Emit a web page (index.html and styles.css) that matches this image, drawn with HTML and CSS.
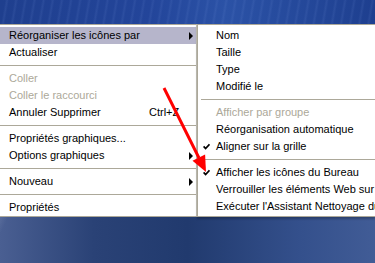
FILE: index.html
```html
<!DOCTYPE html>
<html lang="fr">
<head>
  <meta charset="utf-8" />
  <title>Menu contextuel du Bureau</title>
  <link rel="stylesheet" href="styles.css">
</head>
<body>
<div class="desk">
  <div class="desk-top"></div>
  <div class="menus">
    <ul class="menu menu--main">
      <li class="menu-item menu-item--hot"><span class="menu-label">Réorganiser les icônes par</span><span class="menu-sub"><i class="tri"></i></span></li>
      <li class="menu-item"><span class="menu-label">Actualiser</span><span class="menu-sub"></span></li>
      <li class="menu-sep"></li>
      <li class="menu-item menu-item--off"><span class="menu-label">Coller</span><span class="menu-sub"></span></li>
      <li class="menu-item menu-item--off"><span class="menu-label">Coller le raccourci</span><span class="menu-sub"></span></li>
      <li class="menu-item"><span class="menu-label">Annuler Supprimer</span><span class="menu-key">Ctrl+Z</span><span class="menu-sub"></span></li>
      <li class="menu-sep"></li>
      <li class="menu-item"><span class="menu-label">Propriétés graphiques...</span><span class="menu-sub"></span></li>
      <li class="menu-item"><span class="menu-label">Options graphiques</span><span class="menu-sub"><i class="tri"></i></span></li>
      <li class="menu-sep"></li>
      <li class="menu-item"><span class="menu-label">Nouveau</span><span class="menu-sub"><i class="tri"></i></span></li>
      <li class="menu-sep"></li>
      <li class="menu-item"><span class="menu-label">Propriétés</span><span class="menu-sub"></span></li>
    </ul>
    <ul class="menu menu--side">
      <li class="menu-item"><span class="menu-check"></span><span class="menu-label">Nom</span></li>
      <li class="menu-item"><span class="menu-check"></span><span class="menu-label">Taille</span></li>
      <li class="menu-item"><span class="menu-check"></span><span class="menu-label">Type</span></li>
      <li class="menu-item"><span class="menu-check"></span><span class="menu-label">Modifié le</span></li>
      <li class="menu-sep"></li>
      <li class="menu-item menu-item--off"><span class="menu-check"></span><span class="menu-label">Afficher par groupe</span></li>
      <li class="menu-item"><span class="menu-check"></span><span class="menu-label">Réorganisation automatique</span></li>
      <li class="menu-item"><span class="menu-check"><svg class="tick" viewBox="0 0 7 7"><path d="M0.6 3.4 L2.6 5.6 L6.5 1.2" /></svg></span><span class="menu-label">Aligner sur la grille</span></li>
      <li class="menu-sep"></li>
      <li class="menu-item"><span class="menu-check"><svg class="tick" viewBox="0 0 7 7"><path d="M0.6 3.4 L2.6 5.6 L6.5 1.2" /></svg></span><span class="menu-label">Afficher les icônes du Bureau</span></li>
      <li class="menu-item"><span class="menu-check"></span><span class="menu-label">Verrouiller les éléments Web sur le Bureau</span></li>
      <li class="menu-item"><span class="menu-check"></span><span class="menu-label">Exécuter l'Assistant Nettoyage du Bureau</span></li>
    </ul>
  </div>
  <svg class="pointer" viewBox="0 0 375 263">
    <line x1="164" y1="88" x2="199" y2="158" />
    <polygon points="206,172 192.5,160.8 205.1,154.6" />
  </svg>
</div>
</body>
</html>
```

FILE: styles.css
```css
:root {
  --menu-bg: #fff;
  --menu-line: #aca899;
  --hot: #b6b5cb;
  --off: #aca899;
  --ink: #000;
}
html, body {
  margin: 0;
  padding: 0;
}
body {
  width: 375px;
  height: 263px;
  overflow: hidden;
  font-family: "Liberation Sans", Arial, sans-serif;
  font-size: 11px;
}
.desk {
  position: relative;
  width: 375px;
  height: 263px;
  background:
    linear-gradient(115deg, rgba(160,175,205,0) 0, rgba(160,175,205,0) 8%, rgba(170,182,210,0.7) 14%, rgba(160,175,205,0) 22%),
    linear-gradient(90deg, #4a5f92 0, #2a4276 25%, #213a6e 50%, #34508c 80%, #415c96 100%);
}
.desk-top {
  height: 24px;
  background:
    repeating-linear-gradient(100deg, rgba(255,255,255,0) 0, rgba(255,255,255,0) 5px, rgba(120,150,220,0.12) 7px, rgba(255,255,255,0) 9px),
    linear-gradient(90deg, #1f3f8e 0, #23459a 40%, #2b52a6 60%, #1e3f8f 100%);
}
.menus {
  display: flex;
  align-items: flex-start;
}
.menu {
  list-style: none;
  margin: 0;
  background: var(--menu-bg);
  border: 1px solid var(--menu-line);
  color: var(--ink);
  white-space: nowrap;
}
.menu--main {
  width: 196px;
  padding: 2px 0 0;
  border-left: 0;
  border-right-color: #c8c6bc;
}
.menu--side {
  flex: 1;
  min-width: 0;
  overflow: hidden;
  padding: 2px 0 1px;
  border-right: 0;
  box-shadow: 0 2px 2px rgba(0,0,0,0.25);
}
.menu-item {
  display: flex;
  align-items: center;
  height: 17px;
  line-height: 17px;
}
.menu--main .menu-item {
  padding-left: 9px;
}
.menu-item--hot {
  background: var(--hot);
}
.menu-item--off {
  color: var(--off);
}
.menu-label {
  flex: 1;
}
.menu-key {
  width: 30px;
}
.menu-sub {
  width: 14px;
  padding-right: 3px;
  display: flex;
  justify-content: flex-end;
}
.tri {
  display: block;
  width: 0;
  height: 0;
  border-left: 4px solid var(--ink);
  border-top: 4px solid transparent;
  border-bottom: 4px solid transparent;
}
.menu-sep {
  height: 9px;
  display: flex;
  align-items: center;
}
.menu-sep::before {
  content: "";
  flex: 1;
  height: 1px;
  background: var(--menu-line);
}
.menu--side .menu-sep::before {
  margin-left: 3px;
}
.menu-check {
  width: 18px;
  flex: none;
  display: flex;
  align-items: center;
}
.tick {
  width: 7px;
  height: 7px;
  margin-left: 5px;
}
.tick path {
  fill: none;
  stroke: var(--ink);
  stroke-width: 1.7;
}
.pointer {
  position: absolute;
  left: 0;
  top: 0;
  width: 375px;
  height: 263px;
  pointer-events: none;
}
.pointer line {
  stroke: #f00;
  stroke-width: 3;
}
.pointer polygon {
  fill: #f00;
}
```
